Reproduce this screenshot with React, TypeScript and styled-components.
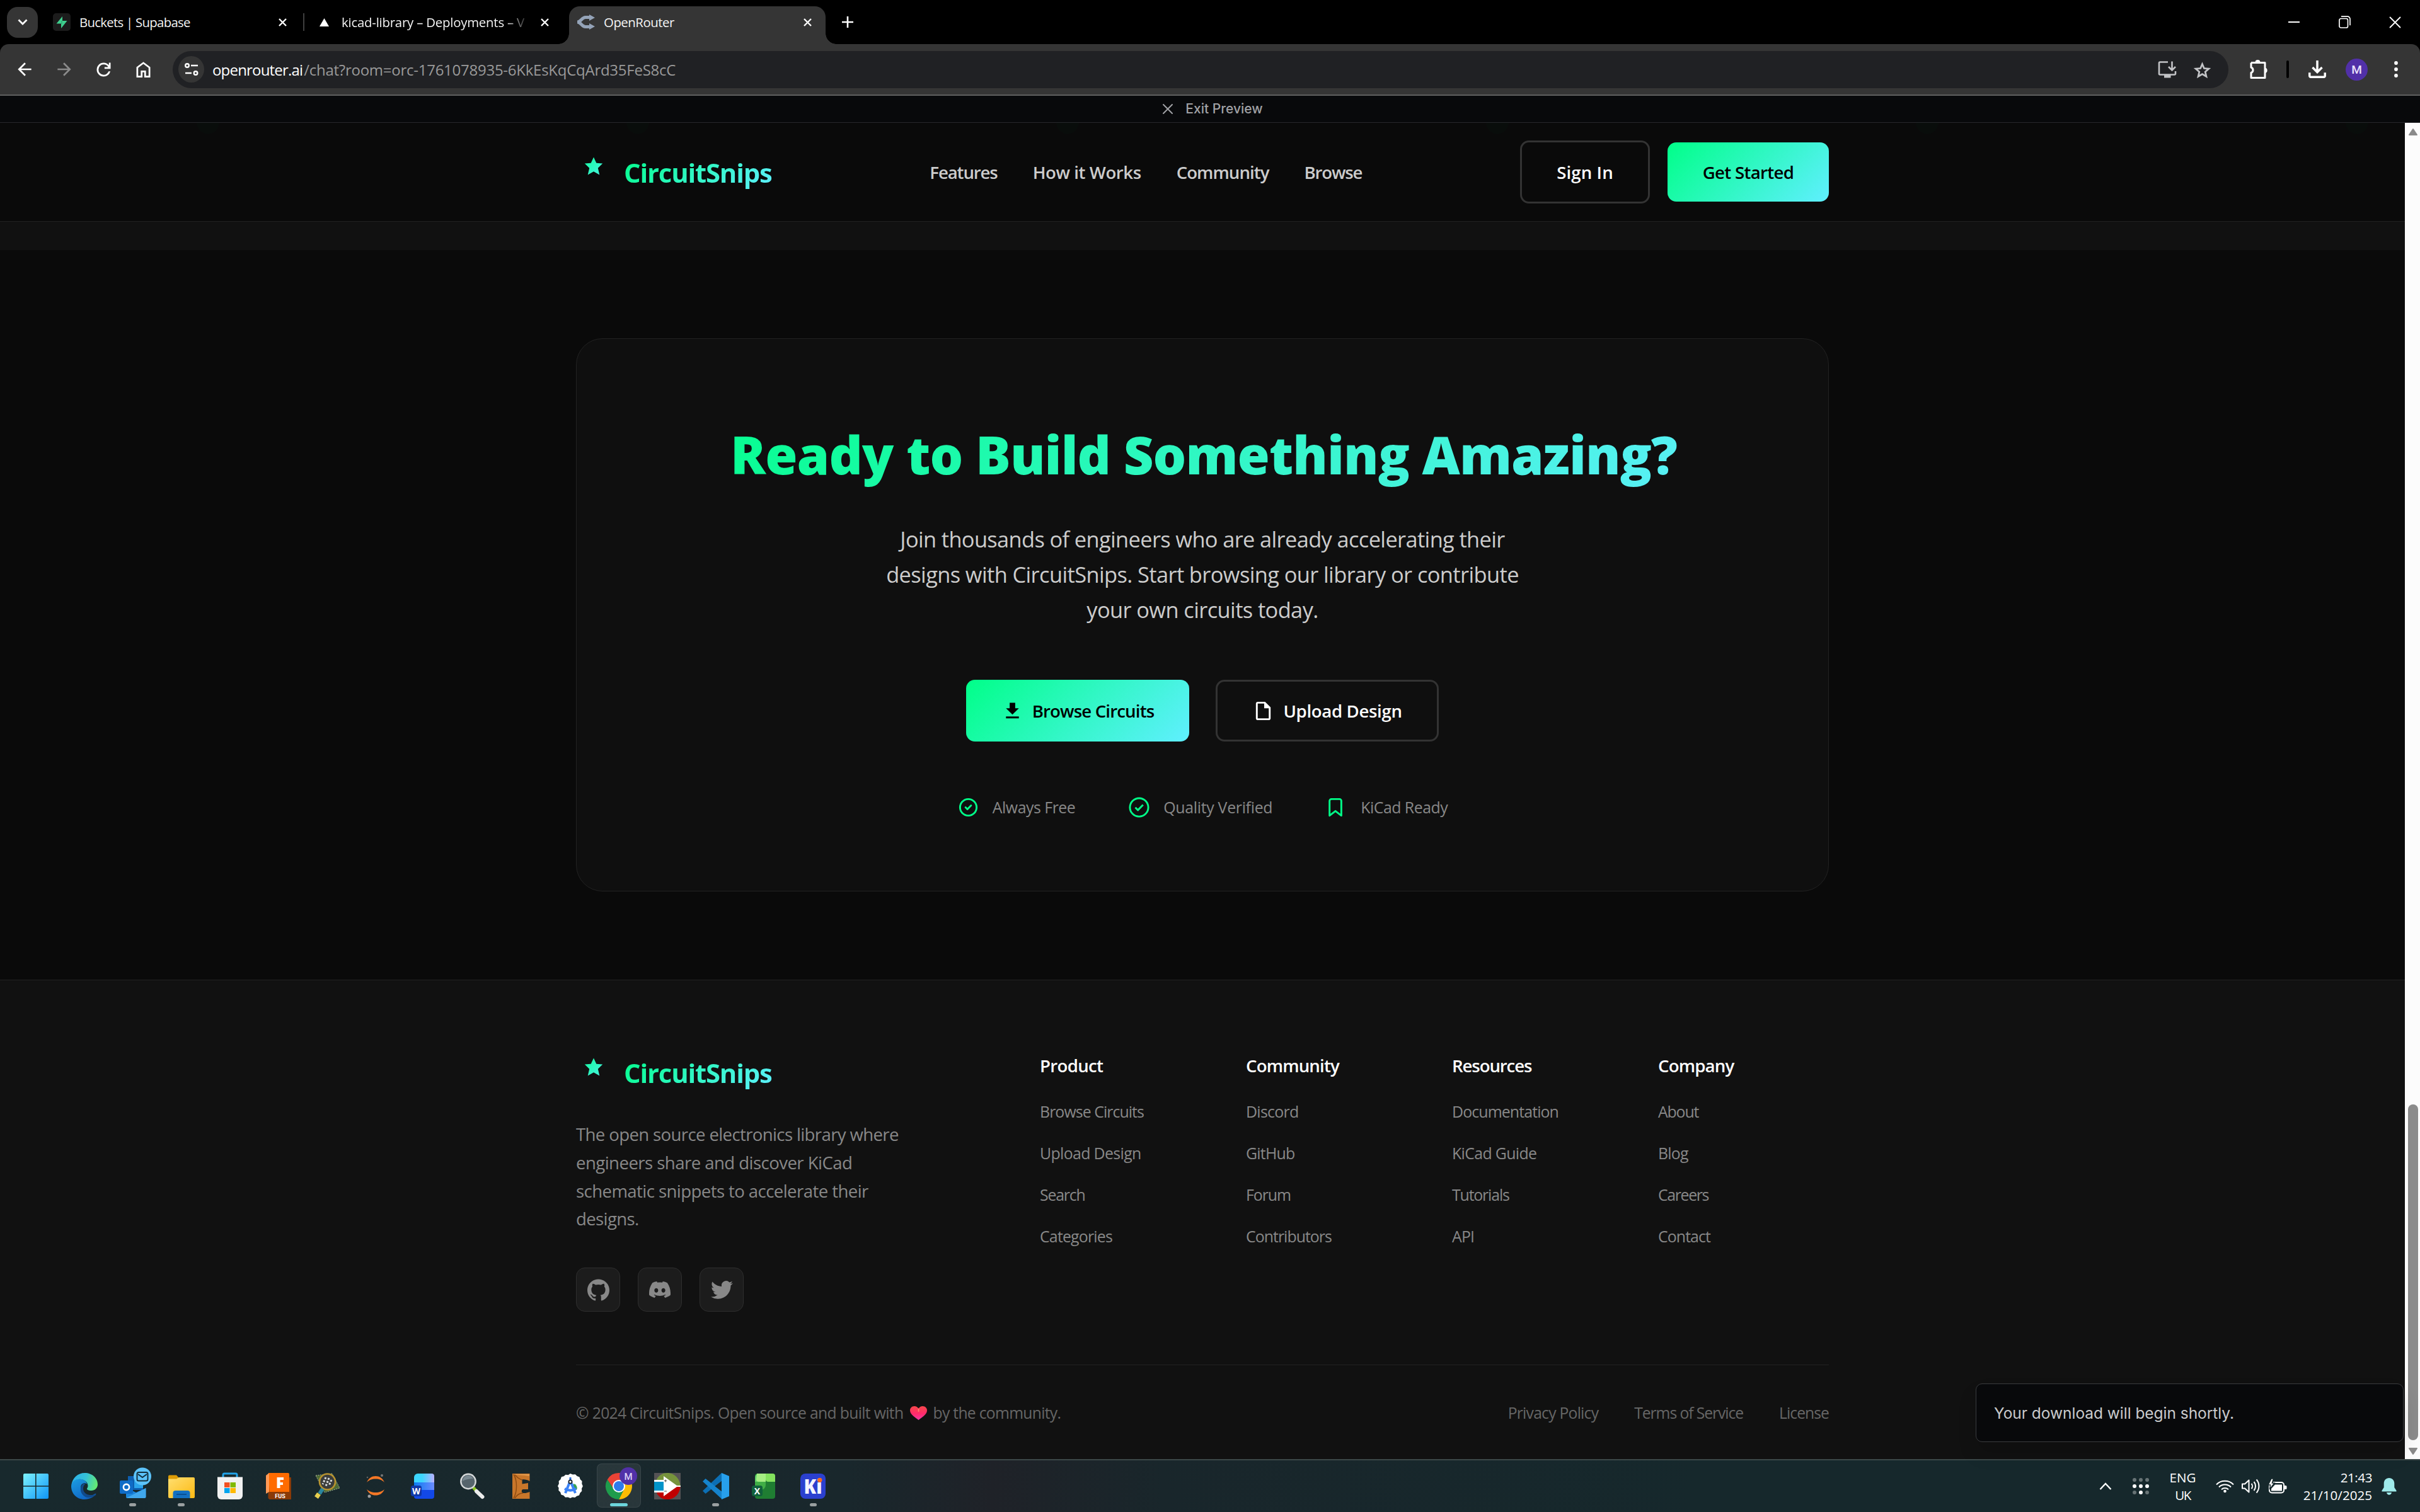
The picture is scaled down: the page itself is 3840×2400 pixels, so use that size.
import React, { useLayoutEffect, useRef, useState } from 'react';
import styled, { createGlobalStyle, css } from 'styled-components';
import { SiDiscord } from 'react-icons/si';

const SEGOE = '"Open Sans", "Noto Sans", sans-serif';
const INTER = 'Inter, Roboto, sans-serif';
const BRAND = 'linear-gradient(135deg, #00ff88 0%, #60efff 100%)';

const GlobalStyle = createGlobalStyle`
  * { box-sizing: border-box; }
  html, body { margin: 0; padding: 0; background: #000; overflow: hidden; }
  body { font-family: ${SEGOE}; color: #fff; }
  svg { display: block; flex: none; }
`;

/* ---------- text that is tracked to a given ink width ---------- */

const Tracked = styled.span`
  display: inline-block;
  white-space: nowrap;
`;

function Fit({ w, children }: { w: number; children: string }) {
  const ref = useRef<HTMLSpanElement>(null);
  const [spacing, setSpacing] = useState(0);
  useLayoutEffect(() => {
    const el = ref.current;
    const ctx = document.createElement('canvas').getContext('2d');
    if (!el || !ctx) return;
    const cs = getComputedStyle(el);
    ctx.font = `${cs.fontWeight} ${cs.fontSize} ${cs.fontFamily}`;
    const m = ctx.measureText(children);
    const ink = m.actualBoundingBoxRight + m.actualBoundingBoxLeft;
    setSpacing((w - ink) / (children.length - 1));
  }, [w, children]);
  return <Tracked ref={ref} style={{ letterSpacing: spacing }}>{children}</Tracked>;
}

/* ---------- browser chrome ---------- */

const Screen = styled.div`
  width: 3840px;
  height: 2400px;
  display: flex;
  flex-direction: column;
  overflow: hidden;
  background: #000;
`;

const TabStrip = styled.div`
  height: 70px;
  flex: none;
  display: flex;
  align-items: center;
  background: #000;
`;

const TabSearch = styled.div`
  width: 49px;
  height: 49px;
  margin: 0 8px 0 11px;
  border-radius: 17px;
  background: #353535;
  display: flex;
  align-items: center;
  justify-content: center;
`;

const Tab = styled.div<{ $width: number; $pad: string; $active?: boolean }>`
  position: relative;
  width: ${(p) => p.$width}px;
  height: 60px;
  margin-top: 10px;
  padding: ${(p) => p.$pad};
  display: flex;
  align-items: center;
  gap: 14px;
  padding-bottom: 10px;
  ${(p) =>
    p.$active &&
    css`
      background: #353535;
      border-radius: 17px 17px 0 0;
      &::before,
      &::after {
        content: '';
        position: absolute;
        bottom: 0;
        width: 17px;
        height: 17px;
      }
      &::before {
        left: -17px;
        background: radial-gradient(circle at 0 0, transparent 16.5px, #353535 17px);
      }
      &::after {
        right: -17px;
        background: radial-gradient(circle at 100% 0, transparent 16.5px, #353535 17px);
      }
    `}
`;

const Favicon = styled.div<{ $bg?: string }>`
  width: 28px;
  height: 28px;
  flex: none;
  border-radius: 5px;
  background: ${(p) => p.$bg || 'transparent'};
  display: flex;
  align-items: center;
  justify-content: center;
`;

const TabTitle = styled.div<{ $fade?: boolean }>`
  flex: 1;
  min-width: 0;
  white-space: nowrap;
  font-size: 20.4px;
  line-height: 30px;
  color: #f4f4f4;
  ${(p) =>
    p.$fade &&
    css`
      mask-image: linear-gradient(90deg, #000 88%, transparent 101%);
    `}
`;

const TabDivider = styled.div`
  width: 2px;
  height: 28px;
  background: #3f3f3f;
`;

const TabClose = styled.div`
  width: 24px;
  display: flex;
  justify-content: center;
`;

const NewTab = styled.div`
  width: 28px;
  margin-left: 21px;
  display: flex;
  justify-content: center;
`;

const WindowControls = styled.div`
  margin-left: auto;
  margin-right: -1px;
  display: flex;
`;

const WindowButton = styled.div`
  width: 80.5px;
  height: 70px;
  display: flex;
  align-items: center;
  justify-content: center;
`;

const Toolbar = styled.div`
  height: 82px;
  flex: none;
  padding-left: 7px;
  display: flex;
  align-items: center;
  background: #353535;
  border-bottom: 2px solid #5f5f5f;
  border-radius: 14px 14px 0 0;
`;

const NavButton = styled.div`
  width: 63px;
  display: flex;
  justify-content: center;
`;

const Omnibox = styled.div`
  width: 3262px;
  height: 59px;
  margin-left: 15px;
  padding: 0 25px 0 9px;
  border-radius: 30px;
  background: #202124;
  display: flex;
  align-items: center;
`;

const SiteChip = styled.div`
  width: 41px;
  height: 42px;
  border-radius: 50%;
  background: #353535;
  display: flex;
  align-items: center;
  justify-content: center;
`;

const Url = styled.div`
  flex: 1;
  margin-left: 13px;
  padding-top: 2px;
  font-size: 24px;
  line-height: 36px;
  color: #999;
  display: flex;
`;

const UrlHost = styled.span`
  margin-right: 2px;
  color: #fff;
`;

const OmniActions = styled.div`
  display: flex;
  align-items: center;
  gap: 24px;
`;

const ToolButton = styled.div<{ $left: number }>`
  width: 60px;
  margin-left: ${(p) => p.$left}px;
  display: flex;
  justify-content: center;
`;

const ToolDivider = styled.div`
  width: 3.5px;
  height: 28px;
  margin-left: 14px;
  border-radius: 2px;
  background: #000;
`;

const Avatar = styled.div`
  width: 35px;
  height: 35px;
  margin-left: 15px;
  border-radius: 50%;
  background: #5130a8;
  font: 500 19px/36px Roboto, sans-serif;
  text-align: center;
  color: #e9e2fb;
`;

/* ---------- preview frame ---------- */

const PreviewBar = styled.div`
  height: 43px;
  flex: none;
  padding-left: 3px;
  display: flex;
  align-items: center;
  justify-content: center;
  gap: 14px;
  background: #08090b;
  border-bottom: 1px solid #27282b;
  font: 500 21px/30px ${INTER};
  color: #a0a1a5;
`;

const Viewport = styled.div`
  position: relative;
  flex: none;
  height: 2121px;
  display: flex;
`;

const Page = styled.div`
  width: 3816px;
  display: flex;
  flex-direction: column;
  background: #0a0a0a;
`;

const ScrollTrack = styled.div`
  width: 24px;
  padding: 8px 3px 6px 5px;
  display: flex;
  flex-direction: column;
  background: #fcfcfc;
`;

const ScrollThumb = styled.div`
  width: 16px;
  height: 533px;
  margin: auto 0 12px;
  border-radius: 8px;
  background: #8b8b8b;
`;

const Toast = styled.div`
  position: absolute;
  right: 26px;
  bottom: 27px;
  width: 679px;
  height: 93px;
  padding: 0 28px;
  display: flex;
  align-items: center;
  border: 1px solid #3a3b3e;
  border-radius: 10px;
  background: #08090b;
  box-shadow: 0 18px 30px rgba(0, 0, 0, 0.12);
  font: 400 24.5px/36px ${INTER};
  color: #c9cacc;
`;

/* ---------- site header ---------- */

const SiteHeader = styled.header`
  height: 157px;
  flex: none;
  display: flex;
  align-items: center;
  justify-content: center;
  border-bottom: 1px solid #222;
  background: radial-gradient(circle at 330px 0, #090d0b 17px, transparent 18px) 0 0 / 682px 100%, #0a0a0a;
`;

const HeaderInner = styled.div`
  width: 1988px;
  display: flex;
  align-items: center;
  justify-content: space-between;
`;

const Logo = styled.div`
  height: 67px;
  display: flex;
  align-items: center;
  gap: 20px;
`;

const LogoText = styled.span`
  font-size: 41.8px;
  line-height: 67px;
  font-weight: 700;
  background: ${BRAND};
  background-clip: text;
  -webkit-background-clip: text;
  color: transparent;
`;

const SiteNav = styled.nav`
  display: flex;
  gap: 56px;
`;

const NavLink = styled.a`
  font-size: 27.6px;
  line-height: 45px;
  font-weight: 600;
  color: #ccc;
`;

const HeaderActions = styled.div`
  display: flex;
  align-items: center;
  gap: 28px;
`;

const Button = styled.button<{ $primary?: boolean; $width: number; $height: number }>`
  width: ${(p) => p.$width}px;
  height: ${(p) => p.$height}px;
  padding: 0;
  display: flex;
  align-items: center;
  justify-content: center;
  gap: 14px;
  border: ${(p) => (p.$primary ? 'none' : '3px solid #333')};
  border-radius: 14px;
  background: ${(p) => (p.$primary ? BRAND : 'transparent')};
  color: ${(p) => (p.$primary ? '#000' : '#fff')};
  font: 600 27.6px/45px ${SEGOE};
`;

const PreviousSection = styled.div`
  height: 45px;
  flex: none;
  background: #111;
`;

/* ---------- call to action ---------- */

const Cta = styled.section`
  height: 1158px;
  flex: none;
  padding-top: 140px;
  display: flex;
  justify-content: center;
`;

const CtaCard = styled.div`
  width: 1988px;
  height: 878px;
  padding: 133px 112px 0;
  display: flex;
  flex-direction: column;
  align-items: center;
  border: 1px solid #222;
  border-radius: 42px;
  background: #0f0f0f;
`;

const CtaTitle = styled.h2`
  margin: 0;
  padding: 0 0 12px 4px;
  width: 100%;
  font-size: 83px;
  line-height: 100px;
  font-weight: 800;
  text-align: center;
  background: ${BRAND};
  background-clip: text;
  -webkit-background-clip: text;
  color: transparent;
`;

const CtaText = styled.p`
  margin: 45px 0 0;
  display: flex;
  flex-direction: column;
  align-items: center;
  font-size: 34.4px;
  line-height: 56px;
  color: #ccc;
`;

const CtaActions = styled.div`
  margin-top: 83px;
  display: flex;
  gap: 42px;
`;

const CtaPerks = styled.div`
  margin-top: 84px;
  display: flex;
  gap: 84px;
`;

const Perk = styled.div`
  display: flex;
  align-items: center;
  gap: 21px;
  font-size: 24.9px;
  line-height: 40px;
  color: #888;
`;

/* ---------- footer ---------- */

const Footer = styled.footer`
  flex: 1;
  padding: 113px 914px 0;
  border-top: 1px solid #222;
  background: #111;
`;

const FooterGrid = styled.div`
  height: 498px;
  display: grid;
  grid-template-columns: 680px repeat(4, 1fr);
  gap: 56px;
  border-bottom: 1px solid #222;
`;

const FooterText = styled.p`
  margin: 42px 0 55px;
  display: flex;
  flex-direction: column;
  align-items: flex-start;
  font-size: 27.6px;
  line-height: 44.8px;
  color: #888;
`;

const Socials = styled.div`
  display: flex;
  gap: 28px;
`;

const SocialLink = styled.a`
  width: 70px;
  height: 70px;
  display: flex;
  align-items: center;
  justify-content: center;
  border: 1px solid #2e2e2e;
  border-radius: 14px;
  background: #1c1c1c;
  color: #888;
`;

const FooterColumn = styled.div`
  display: flex;
  flex-direction: column;
  align-items: flex-start;
`;

const FooterHeading = styled.h4`
  margin: 0 0 28px;
  font-size: 27.6px;
  line-height: 45px;
  font-weight: 600;
  color: #fff;
`;

const FooterLink = styled.a`
  margin-bottom: 21px;
  font-size: 24.9px;
  line-height: 45px;
  color: #888;
`;

const FooterBottom = styled.div`
  padding-top: 56px;
  display: flex;
  justify-content: space-between;
  font-size: 24.7px;
  line-height: 40px;
  color: #666;
`;

const Copyright = styled.div`
  display: flex;
  align-items: center;
  gap: 10px;
`;

const LegalLinks = styled.div`
  display: flex;
  gap: 57px;
`;

/* ---------- taskbar ---------- */

const TaskbarRoot = styled.div`
  height: 84px;
  flex: none;
  padding: 0 35px 0 18px;
  display: flex;
  align-items: center;
  border-top: 2px solid #3c4849;
  background: linear-gradient(90deg, #18292d 0%, #19272c 35%, #1f2228 41%, #19262b 48%, #16282c 70%, #16282c 100%);
`;

const TaskSlot = styled.div<{ $active?: boolean }>`
  position: relative;
  width: 77.1px;
  height: 82px;
  display: flex;
  align-items: center;
  justify-content: center;
  &::before {
    content: '';
    display: ${(p) => (p.$active ? 'block' : 'none')};
    position: absolute;
    inset: 5px 3.5px 7px;
    border-radius: 8px;
    border: 1px solid rgba(255, 255, 255, 0.08);
    background: rgba(255, 255, 255, 0.07);
  }
  svg {
    position: relative;
    overflow: visible;
  }
`;

const Indicator = styled.div<{ $active?: boolean }>`
  position: absolute;
  bottom: 9px;
  width: ${(p) => (p.$active ? 28 : 11)}px;
  height: 5px;
  border-radius: 3px;
  background: ${(p) => (p.$active ? '#6cd5dc' : '#9aa0a1')};
`;

const Tray = styled.div`
  margin-left: auto;
  display: flex;
  align-items: center;
  font-size: 20.6px;
  line-height: 28px;
`;

const TrayItem = styled.div<{ $width: number; $left: number }>`
  width: ${(p) => p.$width}px;
  margin-left: ${(p) => p.$left}px;
  display: flex;
  flex-direction: column;
  align-items: center;
  justify-content: center;
`;

const Clock = styled.div`
  width: 135px;
  display: flex;
  flex-direction: column;
  align-items: flex-end;
`;

/* ---------- icons ---------- */

const Sym = ({ d, size, color = '#fff' }: { d: string; size: number; color?: string }) => (
  <svg width={size} height={size} viewBox="0 -960 960 960" fill={color}>
    <path d={d} />
  </svg>
);

const BACK = 'm313-440 224 224-57 56-320-320 320-320 57 56-224 224h487v80H313Z';
const FORWARD = 'M647-440H160v-80h487L423-744l57-56 320 320-320 320-57-56 224-224Z';
const HOME = 'M240-200h120v-240h240v240h120v-360L480-740 240-560v360Zm-80 80v-480l320-240 320 240v480H520v-240h-80v240H160Z';
const RELOAD =
  'M480-160q-134 0-227-93t-93-227q0-134 93-227t227-93q69 0 132 28.5T720-690v-110h80v280H520v-80h168q-32-56-87.5-88T480-720q-100 0-170 70t-70 170q0 100 70 170t170 70q77 0 139-44t87-116h84q-28 106-114 173t-196 67Z';
const STAR =
  'm354-247 126-76 126 77-33-144 111-96-146-13-58-136-58 135-146 13 111 97-32 143ZM233-80l65-281L80-550l288-25 112-265 112 265 288 25-218 189 65 281-247-149L233-80Z';
const DOWNLOAD =
  'M480-320 280-520l56-58 104 104v-326h80v326l104-104 56 58-200 200ZM240-160q-33 0-56.5-23.5T160-240v-120h80v120h480v-120h80v120q0 33-23.5 56.5T720-160H240Z';

const Cross = ({ size, weight = 2.4 }: { size: number; weight?: number }) => (
  <svg width={size} height={size} viewBox={`0 0 ${size} ${size}`} stroke="#fff" strokeWidth={weight}>
    <path d={`M1 1 L${size - 1} ${size - 1} M${size - 1} 1 L1 ${size - 1}`} />
  </svg>
);

const LogoStar = () => (
  <svg width="56" height="56" viewBox="0 0 56 56">
    <defs>
      <linearGradient id="starFill" gradientUnits="userSpaceOnUse" x1="4" y1="-6" x2="56" y2="46">
        <stop offset="0" stopColor="#00ff88" />
        <stop offset="1" stopColor="#60efff" />
      </linearGradient>
    </defs>
    <path
      fill="url(#starFill)"
      d="M28 4.500L32.300 13.800L42.200 14.600L34.800 21.800L37.300 32.600L28 27.200L18.700 32.600L21.200 21.800L13.800 14.600L23.700 13.800Z"
    />
  </svg>
);

const Outline = ({ children }: { children: React.ReactNode }) => (
  <svg width="35" height="35" viewBox="0 0 24 24" fill="none" stroke="#00ff88" strokeWidth="2">
    {children}
  </svg>
);

const Heart = () => (
  <svg width="27" height="22" viewBox="0 0 27 22">
    <defs>
      <linearGradient id="heartFill" x1="0" y1="0" x2="0" y2="1">
        <stop offset="0.1" stopColor="#f8434f" />
        <stop offset="0.55" stopColor="#ff2a6c" />
        <stop offset="1" stopColor="#f03aa8" />
      </linearGradient>
    </defs>
    <path fill="url(#heartFill)" d="M13.5 22C9 18.500 0 13.500 0 6.800 0 2.800 3 0 6.900 0c2.800 0 5.200 1.500 6.600 3.800C14.900 1.500 17.300 0 20.100 0 24 0 27 2.800 27 6.800 27 13.500 18 18.500 13.500 22z" />
    <path d="M13.500 3.800v5" stroke="#ff8a6c" strokeWidth="1.600" />
  </svg>
);

const Ico = ({ children }: { children: React.ReactNode }) => (
  <svg width="42" height="42" viewBox="0 0 42 42">
    {children}
  </svg>
);

const WindowsIcon = () => (
  <Ico>
    <defs>
      <linearGradient id="win" gradientUnits="userSpaceOnUse" x1="1" y1="1" x2="41" y2="41">
        <stop offset="0" stopColor="#7df3ff" />
        <stop offset="1" stopColor="#0f95f7" />
      </linearGradient>
    </defs>
    <path
      fill="url(#win)"
      d="M3 1h17v19.300H1V3a2 2 0 0 1 2-2zM21.600 1H39a2 2 0 0 1 2 2v17.300H21.600zM1 21.700h19V41H3a2 2 0 0 1-2-2zM21.600 21.700H41V39a2 2 0 0 1-2 2H21.600z"
    />
  </Ico>
);

const EdgeIcon = () => (
  <Ico>
    <defs>
      <linearGradient id="edgeTop" x1="0" y1="0.400" x2="1" y2="0.600">
        <stop offset="0" stopColor="#2bb2ea" />
        <stop offset="0.500" stopColor="#35c2d8" />
        <stop offset="1" stopColor="#66eb6e" />
      </linearGradient>
      <linearGradient id="edgeLow" x1="0" y1="0" x2="0.600" y2="1">
        <stop offset="0" stopColor="#1b9de2" />
        <stop offset="1" stopColor="#1065c4" />
      </linearGradient>
    </defs>
    <path fill="url(#edgeLow)" d="M0 21C0 13 7 9.500 13 9.500c6 0 11 3 12 8-4-3-10-1-10 6 0 8 8 14 17 12 3-.5 6-2.500 7.500-3C36 38.500 29 42 21 42 9 42 0 33 0 21z" />
    <path fill="#114a8b" d="M19.500 16.500c-6 5-6 13-1 18.500 5 5.500 13 5.500 20 .5 1-1 1.500-2 .5-1.700-9 3.500-20 .2-20-9 0-3 1-5.500 3.500-7z" />
    <path fill="url(#edgeTop)" d="M.500 18.500C2 8 10.500 0 21.500 0 33 0 42 8 42 18c0 6-4.500 10-10 10-4.500 0-7.500-1.500-7-3 .2-1 1.500-1.500 1.500-4.500C26.500 14 20 9.800 13.500 9.800 6.500 9.800 2 13.500.500 18.500z" />
  </Ico>
);

const OutlookIcon = () => (
  <Ico>
    <path fill="#0d5fb0" d="M13 5h24v22H13z" />
    <path fill="#2aa4ec" d="M23 12h14v12H23z" />
    <path fill="#1b87dd" d="M10 24l16 7 15.500-7v14a2 2 0 0 1-2 2H12a2 2 0 0 1-2-2z" />
    <path fill="#50b5f2" d="M10 40l31.500-16v14a2 2 0 0 1-2 2z" opacity=".7" />
    <rect x="0" y="12" width="21" height="21" rx="2" fill="#0f6cc7" />
    <circle cx="10.500" cy="22.500" r="4.600" fill="none" stroke="#fff" strokeWidth="2.600" />
    <circle cx="36" cy="5.500" r="14" fill="#5cc3fa" />
    <rect x="27.500" y="-1" width="17" height="13.500" rx="2.500" fill="none" stroke="#12303d" strokeWidth="2" />
    <path d="M29 2l7 5 7-5" fill="none" stroke="#12303d" strokeWidth="2" />
  </Ico>
);

const FolderIcon = () => (
  <Ico>
    <defs>
      <linearGradient id="fold" x1="0" y1="0" x2="1" y2="1">
        <stop offset="0" stopColor="#ffdf70" />
        <stop offset="1" stopColor="#fdb913" />
      </linearGradient>
    </defs>
    <path fill="#dd9c06" d="M0 5.500a2 2 0 0 1 2-2h11l4 4.500v8H0z" />
    <path fill="url(#fold)" d="M0 9.500h13l4-2.500h23a2 2 0 0 1 2 2v29a2 2 0 0 1-2 2H2a2 2 0 0 1-2-2z" />
    <path fill="#1470c2" d="M7.500 40V32a4 4 0 0 1 4-4h19a4 4 0 0 1 4 4v8z" />
    <path stroke="#0a4f94" strokeWidth="2" d="M13 34h16" />
  </Ico>
);

const StoreIcon = () => (
  <Ico>
    <path d="M10 8V3a2 2 0 0 1 2-2h18a2 2 0 0 1 2 2v5" fill="none" stroke="#22a3e8" strokeWidth="3" />
    <path fill="#f1f1f1" d="M1 6.500h40V36a6 6 0 0 1-6 6H7a6 6 0 0 1-6-6z" />
    <path fill="#f25022" d="M12 15h8.500v8H12z" />
    <path fill="#7fba00" d="M21.500 15H30v8h-8.500z" />
    <path fill="#00a4ef" d="M12 24h8.500v8H12z" />
    <path fill="#ffb900" d="M21.500 24H30v8h-8.500z" />
  </Ico>
);

const FusionIcon = () => (
  <Ico>
    <path fill="#8a3a08" d="M4.500 7H41v35H6.500l-2-2z" />
    <path fill="#ff6b00" d="M5 0h31a2 2 0 0 1 2 2v28H6.500z" />
    <path fill="#ff9a56" d="M1 4l5-4v30l-5 3z" />
    <path fill="#fff" d="M18.500 7H29v4h-5.500v4H28v4h-4.500v5h-5z" />
    <text x="23.500" y="39.500" fill="#fff" fontFamily="Roboto, sans-serif" fontWeight="700" fontSize="9" textAnchor="middle">FUS</text>
  </Ico>
);

const LensChipIcon = () => (
  <Ico>
    <path fill="#4e6b35" stroke="#a8b39a" strokeWidth="1" strokeDasharray="2 1.500" d="M3 4l26-3 12 23-24 7z" />
    <circle cx="21.500" cy="14" r="12.500" fill="#3b3d3c" stroke="#b8932f" strokeWidth="2.600" />
    <path stroke="#d9dcdc" strokeWidth="3" strokeDasharray="3 2.200" d="M19 7l-5 11M24 8l-5 13M28 11l-4 9" />
    <path stroke="#2a86a0" strokeWidth="6" d="M14 25l-5 8" />
    <path stroke="#e6cf4f" strokeWidth="7" d="M8 33l-4 6" />
  </Ico>
);

const JupyterIcon = () => (
  <Ico>
    <path fill="#f37726" d="M7 15C10 8 15 5 21 5s11 3 14 10c-4-4-8-5.500-14-5.500S11 11 7 15zM7 26c3 7 8 9.500 14 9.500S32 33 35 26c-4 3.500-8 5-14 5s-10-1.500-14-5z" />
    <circle cx="31" cy="4" r="2" fill="#767677" />
    <circle cx="8" cy="7" r="1.300" fill="#616262" />
    <circle cx="11" cy="37" r="2.500" fill="#9e9e9e" />
  </Ico>
);

const WordIcon = () => (
  <Ico>
    <defs>
      <linearGradient id="wordTop" x1="0" y1="0" x2="1" y2="0">
        <stop offset="0.400" stopColor="#3cd6ff" />
        <stop offset="1" stopColor="#b9b0ff" />
      </linearGradient>
      <linearGradient id="wordMid" x1="0" y1="0" x2="1" y2="0">
        <stop offset="0" stopColor="#0a7cf0" />
        <stop offset="1" stopColor="#6b8bff" />
      </linearGradient>
    </defs>
    <rect x="5" y="20" width="32" height="21" rx="4" fill="#1248e8" />
    <path fill="url(#wordMid)" d="M5 12h32v15H9a4 4 0 0 1-4-4z" />
    <path fill="url(#wordTop)" d="M5 7a6 6 0 0 1 6-6h22a4 4 0 0 1 4 4v10H5z" />
    <rect x="0" y="20" width="17" height="17" rx="3.500" fill="#1038a8" />
    <text x="8.500" y="33.500" fill="#fff" fontFamily={SEGOE} fontWeight="700" fontSize="13.500" textAnchor="middle">W</text>
  </Ico>
);

const MagnifierIcon = () => (
  <Ico>
    <path stroke="#8bc522" strokeWidth="5" d="M22 23l5 6" />
    <path stroke="#ececec" strokeWidth="6" strokeLinecap="round" d="M27 29l9.500 9" />
    <circle cx="14" cy="13.500" r="11.700" fill="#56646c" stroke="#d6d9da" strokeWidth="2.400" />
    <path fill="#7b8a92" d="M5 13a9 9 0 0 1 17-4c-6 0-12 1-17 4z" />
  </Ico>
);

const EagleIcon = () => (
  <Ico>
    <path fill="#c8762a" d="M7 1h27.500v12c-4-2-8-3-12-2.500v7L32 16v10h-8c-3 0-3 6 0 6 4 .5 8-1 10.500-2v11H7z" />
    <path stroke="#8e4c12" strokeWidth="1.500" fill="none" d="M9 2c6 10 6 28 0 38M22 11C17 9 13 6 11 2M24 32c-6 0-10 3-13 8" />
    <path fill="#e19a4e" d="M8 2h26v3C24 3 14 4 8 2z" />
  </Ico>
);

const StudioIcon = () => (
  <Ico>
    <path
      fill="#fff"
      d="M21 1l4 1.600 4.300-.3 3 3 4 1.500 1.300 4 3 3-.3 4.300L42 22l-2 4 .3 4.300-3 3-1.500 4-4 1.300-3 2.500-4.300-.6L21 42l-4-1.600-4.300.3-3-3-4-1.500-1.300-4-3-3 .3-4.300L0 22l2-4-.3-4.300 3-3 1.500-4 4-1.300 3-2.500 4.300.6z"
      transform="translate(1 0) scale(.95)"
    />
    <path fill="#35a155" d="M26 17a7 7 0 0 1 5 10l-6-1z" />
    <path fill="none" stroke="#3b82f6" strokeWidth="4" d="M19.500 16L13 32M22.500 16L29 32M12 25c6 3.500 12 3.500 18 0" />
    <path stroke="#2467d6" strokeWidth="3" d="M21 7v5" />
    <circle cx="21" cy="14" r="2.600" fill="#fff" stroke="#16202a" strokeWidth="1.800" />
  </Ico>
);

const ChromeIcon = () => (
  <Ico>
    <path fill="#ea4335" d="M21 11.500H39.700A21 21 0 0 0 2.800 10.500L12.800 25.800z" />
    <path fill="#fbbc04" d="M29.200 25.800L21 42A21 21 0 0 0 39.700 11.500H21z" />
    <path fill="#1e9c4c" d="M12.800 25.800L2.800 10.500A21 21 0 0 0 21 42L29.200 25.800z" />
    <circle cx="21" cy="21" r="10" fill="#fff" />
    <circle cx="21" cy="21" r="8" fill="#2f7bea" />
    <circle cx="36" cy="5" r="14" fill="#5130a8" />
    <text x="36" y="10.500" fill="#d9cff5" fontFamily="Roboto, sans-serif" fontWeight="500" fontSize="15" textAnchor="middle">M</text>
  </Ico>
);

const OpampIcon = () => (
  <Ico>
    <path fill="#555355" d="M0 0h42v42H0z" />
    <path fill="#76933c" d="M4 10C8 3 14 0 21 0c11 0 20 9 20.500 21H4z" />
    <path fill="#c00000" d="M4 32c4 7 10 10 17 10 11 0 20-9 20.500-21L10 28z" />
    <path fill="#fff" d="M0 11h15v20H0zM15 5l21 15h6v2h-6L15 37z" />
    <path fill="#0093c9" d="M0 14h15v14H0z" />
    <path stroke="#555" strokeWidth="1.200" d="M16 12.500h4M18 10.500v4M16 29h4" />
  </Ico>
);

const VsCodeIcon = () => (
  <Ico>
    <path fill="#0c6fb4" d="M0 28.500L30 0v13L4.500 33z" />
    <path fill="#1583cc" d="M0 13.500L4.500 9 31 30v12z" />
    <path fill="#27a0ec" d="M30 0l12 5v32l-12 5z" />
    <path fill="#18282c" d="M30 13v16L19.500 21z" />
  </Ico>
);

const ExcelIcon = () => (
  <Ico>
    <rect x="6" y="1" width="32" height="40" rx="4" fill="#1f7d32" />
    <path fill="#5fd068" d="M6 7a6 6 0 0 1 6-6h11v14H6z" />
    <path fill="#a5ee83" d="M9 1h14v13H12a4 4 0 0 1-4-4z" />
    <path fill="#83e25e" d="M23 1h11a4 4 0 0 1 4 4v9H27a4 4 0 0 1-4-4z" />
    <path fill="#40ae46" d="M6 14h17v5a8 8 0 0 1-8 8H6z" />
    <rect x="1" y="20" width="17" height="17" rx="3.500" fill="#11603c" />
    <text x="9.500" y="33.500" fill="#fff" fontFamily={SEGOE} fontWeight="700" fontSize="14" textAnchor="middle">X</text>
  </Ico>
);

const KicadIcon = () => (
  <Ico>
    <rect x="1" y="1" width="40" height="40" rx="8" fill="#2b40cf" />
    <text x="21" y="33" fill="#f4f4ff" fontFamily={SEGOE} fontWeight="800" fontSize="31" textAnchor="middle" textLength="29" lengthAdjust="spacingAndGlyphs">Ki</text>
    <circle cx="31.800" cy="11.300" r="3.600" fill="#ff6a1a" />
  </Ico>
);

type Run = 'none' | 'open' | 'active';
const TASKS: { icon: () => React.ReactElement; run: Run }[] = [
  { icon: WindowsIcon, run: 'none' },
  { icon: EdgeIcon, run: 'none' },
  { icon: OutlookIcon, run: 'open' },
  { icon: FolderIcon, run: 'open' },
  { icon: StoreIcon, run: 'none' },
  { icon: FusionIcon, run: 'none' },
  { icon: LensChipIcon, run: 'none' },
  { icon: JupyterIcon, run: 'none' },
  { icon: WordIcon, run: 'none' },
  { icon: MagnifierIcon, run: 'none' },
  { icon: EagleIcon, run: 'none' },
  { icon: StudioIcon, run: 'none' },
  { icon: ChromeIcon, run: 'active' },
  { icon: OpampIcon, run: 'none' },
  { icon: VsCodeIcon, run: 'open' },
  { icon: ExcelIcon, run: 'none' },
  { icon: KicadIcon, run: 'open' },
];

/* ---------- content ---------- */

const NAV: [string, number][] = [
  ['Features', 106],
  ['How it Works', 170],
  ['Community', 147],
  ['Browse', 90],
];

const COLUMNS: { title: [string, number]; links: [string, number][] }[] = [
  { title: ['Product', 99], links: [['Browse Circuits', 163], ['Upload Design', 158], ['Search', 70.5], ['Categories', 114]] },
  { title: ['Community', 148], links: [['Discord', 81], ['GitHub', 76], ['Forum', 69], ['Contributors', 135]] },
  { title: ['Resources', 125], links: [['Documentation', 166.6], ['KiCad Guide', 132], ['Tutorials', 91], ['API', 34]] },
  { title: ['Company', 120.5], links: [['About', 65.5], ['Blog', 47], ['Careers', 79.6], ['Contact', 83]] },
];

const GITHUB =
  'M12 .297c-6.63 0-12 5.373-12 12 0 5.303 3.438 9.8 8.205 11.385.6.113.82-.258.82-.577 0-.285-.01-1.04-.015-2.04-3.338.724-4.042-1.61-4.042-1.61C4.422 18.07 3.633 17.7 3.633 17.7c-1.087-.744.084-.729.084-.729 1.205.084 1.838 1.236 1.838 1.236 1.07 1.835 2.809 1.305 3.495.998.108-.776.417-1.305.76-1.605-2.665-.3-5.466-1.332-5.466-5.93 0-1.31.465-2.38 1.235-3.22-.135-.303-.54-1.523.105-3.176 0 0 1.005-.322 3.3 1.23.96-.267 1.98-.399 3-.405 1.02.006 2.04.138 3 .405 2.28-1.552 3.285-1.23 3.285-1.23.645 1.653.24 2.873.12 3.176.765.84 1.23 1.91 1.23 3.22 0 4.61-2.805 5.625-5.475 5.92.42.36.81 1.096.81 2.22 0 1.606-.015 2.896-.015 3.286 0 .315.21.69.825.57C20.565 22.092 24 17.592 24 12.297c0-6.627-5.373-12-12-12';
const TWITTER =
  'M23.953 4.57a10 10 0 01-2.825.775 4.958 4.958 0 002.163-2.723c-.951.555-2.005.959-3.127 1.184a4.92 4.92 0 00-8.384 4.482C7.69 8.095 4.067 6.13 1.64 3.162a4.822 4.822 0 00-.666 2.475c0 1.71.87 3.213 2.188 4.096a4.904 4.904 0 01-2.228-.616v.06a4.923 4.923 0 003.946 4.827 4.996 4.996 0 01-2.212.085 4.936 4.936 0 004.604 3.417 9.867 9.867 0 01-6.102 2.105c-.39 0-.779-.023-1.17-.067a13.995 13.995 0 007.557 2.209c9.053 0 13.998-7.496 13.998-13.985 0-.21 0-.42-.015-.63A9.935 9.935 0 0024 4.59z';

const Brand = () => (
  <Logo>
    <LogoStar />
    <LogoText><Fit w={233}>CircuitSnips</Fit></LogoText>
  </Logo>
);

function BrowserChrome() {
  return (
    <>
      <TabStrip>
        <TabSearch>
          <svg width="16" height="10" viewBox="0 0 16 10" fill="none" stroke="#fff" strokeWidth="2.800"><path d="M1.500 1.500L8 8l6.500-6.500" /></svg>
        </TabSearch>
        <Tab $width={413} $pad="0 21px 0 16px">
          <Favicon $bg="#1c1c1c">
            <svg width="18" height="19" viewBox="0 0 18 19"><path fill="#3ecf8e" d="M10 0v7h7.500L8 19v-7.500H.500z" /><path fill="#249361" d="M10 7v5H8V7z" opacity=".5" /></svg>
          </Favicon>
          <TabTitle><Fit w={175}>Buckets | Supabase</Fit></TabTitle>
          <TabClose><Cross size={13} /></TabClose>
        </Tab>
        <TabDivider />
        <Tab $width={420} $pad="0 27px 0 17px">
          <Favicon><svg width="15" height="13" viewBox="0 0 15 13"><path fill="#fff" d="M7.500 0L15 13H0z" /></svg></Favicon>
          <TabTitle $fade><Fit w={290}>kicad-library – Deployments – V</Fit></TabTitle>
          <TabClose><Cross size={13} /></TabClose>
        </Tab>
        <Tab $width={407} $pad="0 17px 0 13px" $active>
          <Favicon>
            <svg width="28" height="24" viewBox="0 0 28 24">
              <path fill="none" stroke="#94a3b8" strokeWidth="5" d="M0 12c6 0 7-7.500 13-7.500h8M0 12c6 0 7 7.500 13 7.500h8" />
              <path fill="#94a3b8" d="M19 0l9 5-9 5zM19 14l9 5-9 5z" />
            </svg>
          </Favicon>
          <TabTitle><Fit w={112}>OpenRouter</Fit></TabTitle>
          <TabClose><Cross size={13} /></TabClose>
        </Tab>
        <NewTab>
          <svg width="18" height="18" viewBox="0 0 18 18" stroke="#fff" strokeWidth="2.600"><path d="M9 0v18M0 9h18" /></svg>
        </NewTab>
        <WindowControls>
          <WindowButton><svg width="18" height="2" viewBox="0 0 18 2"><path fill="#fff" d="M0 0h18v2H0z" /></svg></WindowButton>
          <WindowButton>
            <svg width="19" height="20" viewBox="0 0 19 20" fill="none" stroke="#fff" strokeWidth="1.700">
              <rect x="1" y="4.500" width="13.500" height="14.500" rx="2.500" /><path d="M4 1.200h10a4 4 0 0 1 4 4v10" />
            </svg>
          </WindowButton>
          <WindowButton><Cross size={19} weight={1.8} /></WindowButton>
        </WindowControls>
      </TabStrip>
      <Toolbar>
        <NavButton><Sym d={BACK} size={32} /></NavButton>
        <NavButton><Sym d={FORWARD} size={32} color="#8b8b8b" /></NavButton>
        <NavButton><Sym d={RELOAD} size={33} /></NavButton>
        <NavButton><Sym d={HOME} size={33} /></NavButton>
        <Omnibox>
          <SiteChip>
            <svg width="22" height="20" viewBox="0 0 22 20" fill="none" stroke="#fff" strokeWidth="2.400">
              <circle cx="4" cy="4" r="2.800" /><path d="M10 4h11M1 16h10" /><circle cx="17.500" cy="16" r="2.800" />
            </svg>
          </SiteChip>
          <Url>
            <UrlHost><Fit w={142}>openrouter.ai</Fit></UrlHost>
            <Fit w={590}>/chat?room=orc-1761078935-6KkEsKqCqArd35FeS8cC</Fit>
          </Url>
          <OmniActions>
            <svg width="30" height="28" viewBox="0 0 30 28" fill="none" stroke="#c2c3c6" strokeWidth="2.600">
              <path d="M16 2.500H3.500a1.500 1.500 0 0 0-1.500 1.500v17a1.500 1.500 0 0 0 1.500 1.500h23a1.500 1.500 0 0 0 1.500-1.500V17" />
              <path d="M22.500 1.500v13M17 10l5.500 5.500L28 10" /><path fill="#c2c3c6" stroke="none" d="M10 23h10.500v4.500H10z" />
            </svg>
            <Sym d={STAR} size={33} color="#c2c3c6" />
          </OmniActions>
        </Omnibox>
        <ToolButton $left={18}>
          <svg width="30" height="32" viewBox="0 0 30 32">
            <path fill="none" stroke="#fff" strokeWidth="3" strokeLinejoin="round" d="M3 5.500h22v8.500M25 21v8.500H3v-8a4.500 4.500 0 0 0 0-8.500V5.500M25 13v9" />
            <path fill="#fff" d="M9.500 5a4 4 0 0 1 8 0zM25 13.500a4.300 4.300 0 0 1 0 8.500z" />
          </svg>
        </ToolButton>
        <ToolDivider />
        <ToolButton $left={15.5}><Sym d={DOWNLOAD} size={42} /></ToolButton>
        <Avatar>M</Avatar>
        <ToolButton $left={15}>
          <svg width="6" height="26" viewBox="0 0 6 26" fill="#fff"><circle cx="3" cy="3" r="2.900" /><circle cx="3" cy="13" r="2.900" /><circle cx="3" cy="23" r="2.900" /></svg>
        </ToolButton>
      </Toolbar>
    </>
  );
}

function Site() {
  return (
    <Page>
      <SiteHeader>
        <HeaderInner>
          <Brand />
          <SiteNav>
            {NAV.map(([label, w]) => (
              <NavLink key={label}><Fit w={w}>{label}</Fit></NavLink>
            ))}
          </SiteNav>
          <HeaderActions>
            <Button $width={206} $height={100}><Fit w={87}>Sign In</Fit></Button>
            <Button $primary $width={256} $height={94}><Fit w={142}>Get Started</Fit></Button>
          </HeaderActions>
        </HeaderInner>
      </SiteHeader>
      <PreviousSection />
      <Cta>
        <CtaCard>
          <CtaTitle><Fit w={1496}>Ready to Build Something Amazing?</Fit></CtaTitle>
          <CtaText>
            <Fit w={963}>Join thousands of engineers who are already accelerating their</Fit>
            <Fit w={1002}>designs with CircuitSnips. Start browsing our library or contribute</Fit>
            <Fit w={366}>your own circuits today.</Fit>
          </CtaText>
          <CtaActions>
            <Button $primary $width={354} $height={98}>
              <svg width="35" height="35" viewBox="0 0 24 24" fill="#000"><path d="M5 20h14v-2H5v2zM19 9h-4V3H9v6H5l7 7 7-7z" /></svg>
              <Fit w={192}>Browse Circuits</Fit>
            </Button>
            <Button $width={354} $height={98}>
              <svg width="35" height="35" viewBox="0 0 24 24" fill="#fff"><path d="M14 2H6c-1.100 0-1.990.9-1.990 2L4 20c0 1.100.89 2 1.990 2H18c1.100 0 2-.9 2-2V8l-6-6zm4 18H6V4h7v5h5v11z" /></svg>
              <Fit w={185}>Upload Design</Fit>
            </Button>
          </CtaActions>
          <CtaPerks>
            <Perk>
              <Outline><circle cx="12" cy="12" r="9" /><path d="M9 12l2 2 4-4" strokeLinecap="round" strokeLinejoin="round" /></Outline>
              <Fit w={131}>Always Free</Fit>
            </Perk>
            <Perk>
              <Outline><circle cx="12" cy="12" r="10" /><path d="M7.900 12.200l2.800 2.800 5.600-5.800" strokeLinejoin="round" /></Outline>
              <Fit w={171}>Quality Verified</Fit>
            </Perk>
            <Perk>
              <Outline><path d="M17.400 21L11 16l-6.400 5V5a2 2 0 0 1 2-2h8.800a2 2 0 0 1 2 2z" strokeLinejoin="round" /></Outline>
              <Fit w={137}>KiCad Ready</Fit>
            </Perk>
          </CtaPerks>
        </CtaCard>
      </Cta>
      <Footer>
        <FooterGrid>
          <div>
            <Brand />
            <FooterText>
              <Fit w={512}>The open source electronics library where</Fit>
              <Fit w={436}>engineers share and discover KiCad</Fit>
              <Fit w={463}>schematic snippets to accelerate their</Fit>
              <Fit w={98}>designs.</Fit>
            </FooterText>
            <Socials>
              <SocialLink><svg width="35" height="35" viewBox="0 0 24 24" fill="currentColor"><path d={GITHUB} /></svg></SocialLink>
              <SocialLink><SiDiscord size={34} /></SocialLink>
              <SocialLink><svg width="35" height="35" viewBox="0 0 24 24" fill="currentColor"><path d={TWITTER} /></svg></SocialLink>
            </Socials>
          </div>
          {COLUMNS.map((c) => (
            <FooterColumn key={c.title[0]}>
              <FooterHeading><Fit w={c.title[1]}>{c.title[0]}</Fit></FooterHeading>
              {c.links.map(([label, w]) => (
                <FooterLink key={label}><Fit w={w}>{label}</Fit></FooterLink>
              ))}
            </FooterColumn>
          ))}
        </FooterGrid>
        <FooterBottom>
          <Copyright>
            <Fit w={518}>© 2024 CircuitSnips. Open source and built with</Fit>
            <Heart />
            <Fit w={200}>by the community.</Fit>
          </Copyright>
          <LegalLinks>
            <Fit w={143}>Privacy Policy</Fit>
            <Fit w={173}>Terms of Service</Fit>
            <Fit w={77}>License</Fit>
          </LegalLinks>
        </FooterBottom>
      </Footer>
    </Page>
  );
}

function Taskbar() {
  return (
    <TaskbarRoot>
      {TASKS.map(({ icon: Icon, run }, i) => (
        <TaskSlot key={i} $active={run === 'active'}>
          <Icon />
          {run !== 'none' && <Indicator $active={run === 'active'} />}
        </TaskSlot>
      ))}
      <Tray>
        <TrayItem $width={28} $left={0}>
          <svg width="20" height="12" viewBox="0 0 20 12" fill="none" stroke="#fff" strokeWidth="2.400"><path d="M1.500 11L10 2l8.500 9" /></svg>
        </TrayItem>
        <TrayItem $width={28} $left={28}>
          <svg width="26" height="26" viewBox="0 0 26 26" fill="#fff">
            {[3, 13, 23].map((y) =>
              [3, 13, 23].map((x) => (
                <circle key={`${x}-${y}`} cx={x} cy={y} r="3" opacity={y === 13 || (y === 23 && x === 13) ? 1 : 0.35} />
              )),
            )}
          </svg>
        </TrayItem>
        <TrayItem $width={70} $left={17.5}>
          <Fit w={39}>ENG</Fit>
          <Fit w={25.5}>UK</Fit>
        </TrayItem>
        <TrayItem $width={30} $left={16.5}>
          <svg width="29" height="22" viewBox="0 0 29 22" fill="none" stroke="#fff" strokeWidth="2">
            <path d="M1 8.500a19 19 0 0 1 27 0M5 12.500a13.500 13.500 0 0 1 19 0M9 16.300a8 8 0 0 1 11 0" /><circle cx="14.500" cy="19" r="2.300" fill="#fff" stroke="none" />
          </svg>
        </TrayItem>
        <TrayItem $width={30} $left={12}>
          <svg width="30" height="24" viewBox="0 0 30 24" fill="none" stroke="#fff" strokeWidth="2">
            <path strokeLinejoin="round" d="M1 8.500h4l6.500-6v19l-6.500-6H1z" /><path d="M15.500 8a6 6 0 0 1 0 8M19.500 5a11 11 0 0 1 0 14M23.500 1.500a16 16 0 0 1 0 21" />
          </svg>
        </TrayItem>
        <TrayItem $width={30} $left={12}>
          <svg width="30" height="24" viewBox="0 0 30 24">
            <rect x="2" y="6" width="23" height="16.500" rx="4" fill="none" stroke="#fff" strokeWidth="2" />
            <path fill="#fff" d="M5 19.500V16l6-6.500h11v10zM26 11h2a1.500 1.500 0 0 1 1.500 1.500v3A1.500 1.500 0 0 1 28 17h-2z" />
            <path fill="#fff" stroke="#16282c" strokeWidth="1.600" d="M5 0L0 10h3.500L2.500 17 10 7H6.500L8.500 0z" />
          </svg>
        </TrayItem>
        <Clock>
          <Fit w={49}>21:43</Fit>
          <Fit w={107.5}>21/10/2025</Fit>
        </Clock>
        <TrayItem $width={28} $left={13}>
          <svg width="24" height="27" viewBox="0 0 24 27" fill="#9eeaea">
            <path d="M12 0c5 0 8.300 4 8.300 8.500v6.500l3.200 5a1 1 0 0 1-.9 1.600H1.400A1 1 0 0 1 .5 20l3.200-5V8.500C3.700 4 7 0 12 0zM8 23h8c-.3 2.300-2 3.700-4 3.700S8.300 25.300 8 23z" />
          </svg>
        </TrayItem>
      </Tray>
    </TaskbarRoot>
  );
}

export default function App() {
  return (
    <Screen>
      <GlobalStyle />
      <BrowserChrome />
      <PreviewBar>
        <svg width="28" height="28" viewBox="0 0 24 24" fill="none" stroke="currentColor" strokeWidth="1.700" strokeLinecap="round"><path d="M18 6L6 18M6 6l12 12" /></svg>
        <Fit w={121}>Exit Preview</Fit>
      </PreviewBar>
      <Viewport>
        <Site />
        <ScrollTrack>
          <svg width="16" height="12" viewBox="0 0 16 12"><path fill="#8b8b8b" stroke="#8b8b8b" strokeWidth="2" strokeLinejoin="round" d="M8 2l6 9H2z" /></svg>
          <ScrollThumb />
          <svg width="16" height="12" viewBox="0 0 16 12"><path fill="#8b8b8b" stroke="#8b8b8b" strokeWidth="2" strokeLinejoin="round" d="M8 10L2 1h12z" /></svg>
        </ScrollTrack>
        <Toast><Fit w={380}>Your download will begin shortly.</Fit></Toast>
      </Viewport>
      <Taskbar />
    </Screen>
  );
}
